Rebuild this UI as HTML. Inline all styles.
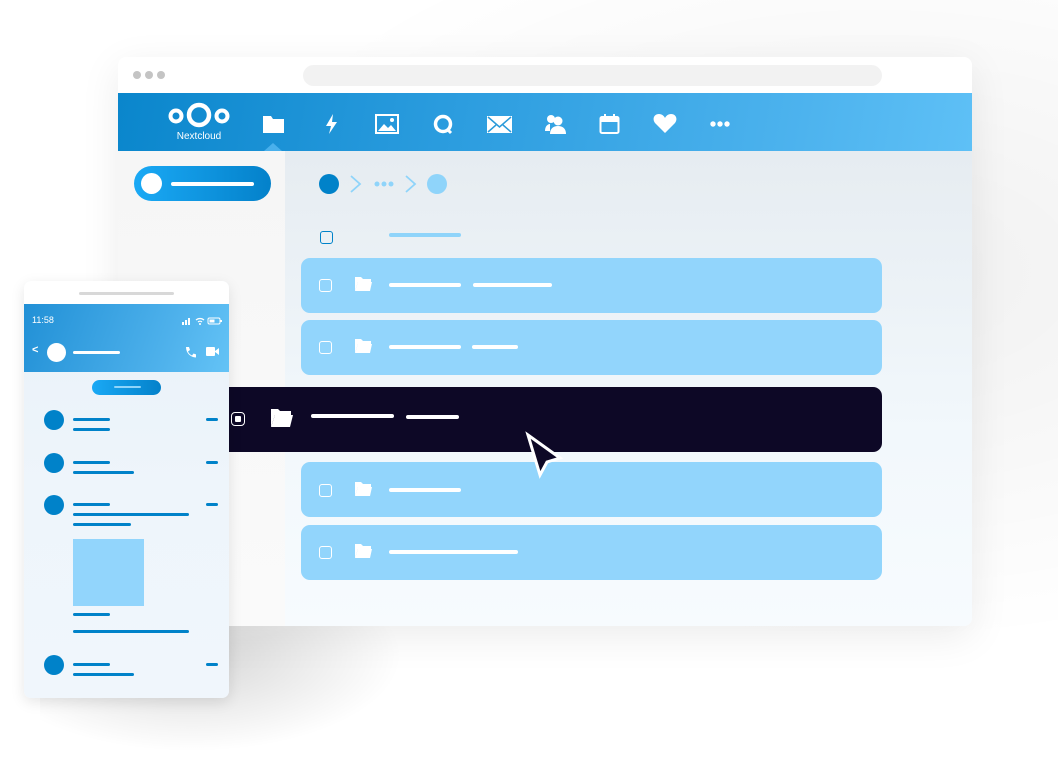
<!DOCTYPE html>
<html><head><meta charset="utf-8"><style>
*{margin:0;padding:0;box-sizing:border-box}
body{width:1058px;height:773px;background:#fff;position:relative;overflow:hidden;font-family:"Liberation Sans",sans-serif}
.a{position:absolute}
.ln{position:absolute;height:4px;border-radius:2px;background:#fff}
.bl{position:absolute;height:3px;border-radius:2px;background:#0082c9}
.row{position:absolute;left:301px;width:581px;height:55px;border-radius:9px;background:#92d5fc}
.cb{position:absolute;width:13px;height:13px;border:1.5px solid #fff;border-radius:3px}
.av{position:absolute;width:20px;height:20px;border-radius:50%;background:#0082c9}
</style></head><body>
<div class="a" style="left:140px;top:0;width:918px;height:680px;background:radial-gradient(ellipse at 80% 40%,rgba(0,0,0,0.06),rgba(0,0,0,0) 65%)"></div>
<div class="a" style="left:40px;top:610px;width:380px;height:150px;background:radial-gradient(ellipse at 40% 30%,rgba(0,0,0,0.16),rgba(0,0,0,0) 65%)"></div>
<div class="a" style="left:118px;top:57px;width:854px;height:569px;background:#fff;border-radius:8px;box-shadow:0 10px 40px rgba(0,0,0,0.08);overflow:hidden">
 <div class="a" style="left:15px;top:14px;width:8px;height:8px;border-radius:50%;background:#c4c4c4"></div>
 <div class="a" style="left:27px;top:14px;width:8px;height:8px;border-radius:50%;background:#c4c4c4"></div>
 <div class="a" style="left:39px;top:14px;width:8px;height:8px;border-radius:50%;background:#c4c4c4"></div>
 <div class="a" style="left:185px;top:8px;width:579px;height:21px;border-radius:11px;background:#f2f2f2"></div>
 <div class="a" style="left:0;top:36px;width:854px;height:58px;background:linear-gradient(100deg,#0a86cc 0%,#2c9ddf 40%,#4db3ee 80%,#5ec0f6 100%)"></div>
 <div class="a" style="left:0;top:94px;width:167px;height:475px;background:linear-gradient(180deg,#f6f6f6,#fafafa)"></div>
 <div class="a" style="left:167px;top:94px;width:687px;height:475px;background:linear-gradient(180deg,#e6ecf1,#f2f8fc 60%,#f7fbfe)"></div>
</div>
<svg class="a" style="left:168px;top:101px" width="62" height="30" viewBox="0 0 62 30">
<circle cx="8" cy="15" r="5.5" fill="none" stroke="#fff" stroke-width="4"/>
<circle cx="31" cy="14" r="10" fill="none" stroke="#fff" stroke-width="4.5"/>
<circle cx="54" cy="15" r="5.5" fill="none" stroke="#fff" stroke-width="4"/>
</svg>
<div class="a" style="left:168px;top:131px;width:62px;text-align:center;color:#fff;font-size:10px">Nextcloud</div>
<svg class="a" style="left:262px;top:114px" width="24" height="20" viewBox="0 0 24 20"><path d="M1 2h8l2 3h11v14H1z" fill="#fff"/></svg>
<div class="a" style="left:264px;top:143px;width:0;height:0;border-left:9px solid transparent;border-right:9px solid transparent;border-bottom:8px solid #49b0ec"></div>
<svg class="a" style="left:324px;top:113px" width="16" height="22" viewBox="0 0 16 22"><path d="M9 1L2 13h5l-2 8 8-12H8z" fill="#fff"/></svg>
<svg class="a" style="left:375px;top:114px" width="24" height="20" viewBox="0 0 24 20"><rect x="1" y="1" width="22" height="18" fill="none" stroke="#fff" stroke-width="2"/><path d="M3 17l6-7 4 4 3-3 5 6z" fill="#fff"/><circle cx="17" cy="6" r="2" fill="#fff"/></svg>
<svg class="a" style="left:432px;top:113px" width="22" height="22" viewBox="0 0 22 22"><circle cx="11" cy="11" r="7.5" fill="none" stroke="#fff" stroke-width="3.5"/><path d="M15 16l4 4" stroke="#fff" stroke-width="3"/></svg>
<svg class="a" style="left:487px;top:116px" width="25" height="17" viewBox="0 0 25 17"><rect x="0" y="0" width="25" height="17" fill="#fff"/><path d="M1 1l11.5 10L24 1M1 16l8-7M24 16l-8-7" fill="none" stroke="#2a9ad9" stroke-width="1.5"/></svg>
<svg class="a" style="left:544px;top:113px" width="22" height="22" viewBox="0 0 22 22"><circle cx="7" cy="6" r="4" fill="#fff"/><circle cx="14" cy="8" r="4.5" fill="#fff"/><path d="M6 21c0-5 3-8 8-8s8 3 8 8z" fill="#fff"/><path d="M1 18c0-5 3-7 5-7v7z" fill="#fff"/></svg>
<svg class="a" style="left:599px;top:113px" width="21" height="22" viewBox="0 0 21 22"><rect x="1.5" y="4" width="18" height="16" rx="1.5" fill="none" stroke="#fff" stroke-width="2"/><rect x="1.5" y="4" width="18" height="5" fill="#fff"/><rect x="5" y="1" width="2" height="5" fill="#fff"/><rect x="14" y="1" width="2" height="5" fill="#fff"/></svg>
<svg class="a" style="left:653px;top:113px" width="24" height="21" viewBox="0 0 24 21"><path d="M12 20L2 10C-1 6 1 1 6 1c3 0 5 2 6 4 1-2 3-4 6-4 5 0 7 5 4 9z" fill="#fff"/></svg>
<svg class="a" style="left:710px;top:120px" width="20" height="8"><circle cx="3" cy="4" r="2.7" fill="#fff"/><circle cx="10" cy="4" r="2.7" fill="#fff"/><circle cx="17" cy="4" r="2.7" fill="#fff"/></svg>
<div class="a" style="left:134px;top:166px;width:137px;height:35px;border-radius:18px;background:linear-gradient(90deg,#1aa9f5,#0481ca)"></div>
<div class="a" style="left:141px;top:173px;width:21px;height:21px;border-radius:50%;background:#fff"></div>
<div class="ln" style="left:171px;top:182px;width:83px"></div>
<div class="a" style="left:319px;top:174px;width:20px;height:20px;border-radius:50%;background:#0082c9"></div>
<svg class="a" style="left:348px;top:174px" width="70" height="20"><path d="M3 2l9 8-9 8M58 2l9 8-9 8" fill="none" stroke="#8fd4fa" stroke-width="1.8"/><circle cx="29" cy="10" r="2.5" fill="#8fd4fa"/><circle cx="36" cy="10" r="2.5" fill="#8fd4fa"/><circle cx="43" cy="10" r="2.5" fill="#8fd4fa"/></svg>
<div class="a" style="left:427px;top:174px;width:20px;height:20px;border-radius:50%;background:#8fd4fa"></div>
<div class="cb" style="left:320px;top:231px;border-color:#0082c9"></div>
<div class="ln" style="left:389px;top:233px;width:72px;background:#8fd4fa"></div>
<div class="row" style="top:258px"></div>
<div class="row" style="top:320px"></div>
<div class="row" style="top:462px"></div>
<div class="row" style="top:525px"></div>
<div class="cb" style="left:319px;top:279px"></div>
<div class="cb" style="left:319px;top:341px"></div>
<div class="cb" style="left:319px;top:484px"></div>
<div class="cb" style="left:319px;top:546px"></div>
<svg class="a" style="left:354px;top:276px" width="19" height="16"><path d="M1 1h6l2 2h8v3H4L1 15z" fill="#fff"/><path d="M4 6h14l-2 9H1z" fill="#fff"/></svg>
<svg class="a" style="left:354px;top:338px" width="19" height="16"><path d="M1 1h6l2 2h8v3H4L1 15z" fill="#fff"/><path d="M4 6h14l-2 9H1z" fill="#fff"/></svg>
<svg class="a" style="left:354px;top:481px" width="19" height="16"><path d="M1 1h6l2 2h8v3H4L1 15z" fill="#fff"/><path d="M4 6h14l-2 9H1z" fill="#fff"/></svg>
<svg class="a" style="left:354px;top:543px" width="19" height="16"><path d="M1 1h6l2 2h8v3H4L1 15z" fill="#fff"/><path d="M4 6h14l-2 9H1z" fill="#fff"/></svg>
<div class="ln" style="left:389px;top:283px;width:72px"></div><div class="ln" style="left:473px;top:283px;width:79px"></div>
<div class="ln" style="left:389px;top:345px;width:72px"></div><div class="ln" style="left:472px;top:345px;width:46px"></div>
<div class="ln" style="left:389px;top:488px;width:72px"></div>
<div class="ln" style="left:389px;top:550px;width:129px"></div>
<div class="a" style="left:229px;top:387px;width:653px;height:65px;border-radius:0 9px 9px 0;background:#0d0826"></div>
<div class="a" style="left:231px;top:412px;width:14px;height:14px;border:1.5px solid #fff;border-radius:4px"></div>
<div class="a" style="left:235px;top:416px;width:6px;height:6px;background:#fff;border-radius:1px"></div>
<svg class="a" style="left:270px;top:408px" width="24" height="20"><path d="M1 1h7l2 2h11v4H5L1 19z" fill="#fff"/><path d="M5 7h18l-3 12H1z" fill="#fff"/></svg>
<div class="ln" style="left:311px;top:414px;width:83px"></div>
<div class="ln" style="left:406px;top:415px;width:53px"></div>
<svg class="a" style="left:522px;top:430px" width="46" height="52"><path d="M6 5l32 23-13 4-7 13z" fill="#0d0826" stroke="#fff" stroke-width="3" stroke-linejoin="miter"/></svg>
<div class="a" style="left:24px;top:281px;width:205px;height:417px;border-radius:7px;background:linear-gradient(180deg,#e9f1f8,#eef5fb 50%,#f0f6fc);box-shadow:0 4px 14px rgba(0,0,0,0.1);overflow:hidden">
 <div class="a" style="left:0;top:0;width:205px;height:23px;background:#fff"></div>
 <div class="a" style="left:55px;top:11px;width:95px;height:3px;border-radius:2px;background:#d8d8d8"></div>
 <div class="a" style="left:0;top:23px;width:205px;height:68px;background:linear-gradient(110deg,#2190d6,#4fb2ec 70%,#64c3f6)"></div>
 <div class="a" style="left:8px;top:34px;color:#fff;font-size:9px">11:58</div>
 <svg class="a" style="left:157px;top:36px" width="44" height="8"><rect x="1" y="5" width="2" height="3" fill="#fff"/><rect x="4" y="3" width="2" height="5" fill="#fff"/><rect x="7" y="1" width="2" height="7" fill="#fff"/><path d="M15 3a6 6 0 0 1 8 0M17 5a3 3 0 0 1 4 0" stroke="#fff" fill="none" stroke-width="1.2"/><circle cx="19" cy="7" r="1" fill="#fff"/><rect x="27" y="1" width="12" height="6" rx="1.5" fill="none" stroke="#fff"/><rect x="28.5" y="2.5" width="5" height="3" fill="#fff"/><rect x="39.5" y="3" width="1.5" height="2" fill="#fff"/></svg>
 <div class="a" style="left:8px;top:63px;color:#fff;font-size:11px;font-weight:bold">&lt;</div>
 <div class="a" style="left:23px;top:62px;width:19px;height:19px;border-radius:50%;background:#fff"></div>
 <div class="ln" style="left:49px;top:70px;width:47px;height:3px"></div>
 <svg class="a" style="left:160px;top:65px" width="12" height="12"><path d="M2 1l3 0 1 3-2 1.5c1 2 2 3 4 4l1.5-2 3 1v3c-6 0-10.5-4.5-10.5-10.5z" fill="#fff"/></svg>
 <svg class="a" style="left:182px;top:66px" width="13" height="9"><rect x="0" y="0" width="9" height="9" rx="1" fill="#fff"/><path d="M9 4l4-3v7l-4-3z" fill="#fff"/></svg>
 <div class="a" style="left:68px;top:99px;width:69px;height:15px;border-radius:8px;background:linear-gradient(90deg,#1aa9f5,#0481ca)"></div>
 <div class="a" style="left:90px;top:105px;width:27px;height:2px;border-radius:1px;background:#8fd4fa"></div>
 <div class="av" style="left:20px;top:129px"></div>
 <div class="bl" style="left:49px;top:137px;width:37px"></div><div class="bl" style="left:49px;top:147px;width:37px"></div><div class="bl" style="left:182px;top:137px;width:12px"></div>
 <div class="av" style="left:20px;top:172px"></div>
 <div class="bl" style="left:49px;top:180px;width:37px"></div><div class="bl" style="left:49px;top:190px;width:61px"></div><div class="bl" style="left:182px;top:180px;width:12px"></div>
 <div class="av" style="left:20px;top:214px"></div>
 <div class="bl" style="left:49px;top:222px;width:37px"></div><div class="bl" style="left:49px;top:232px;width:116px"></div><div class="bl" style="left:49px;top:242px;width:58px"></div><div class="bl" style="left:182px;top:222px;width:12px"></div>
 <div class="a" style="left:49px;top:258px;width:71px;height:67px;background:#92d5fc"></div>
 <div class="bl" style="left:49px;top:332px;width:37px"></div><div class="bl" style="left:49px;top:349px;width:116px"></div>
 <div class="av" style="left:20px;top:374px"></div>
 <div class="bl" style="left:49px;top:382px;width:37px"></div><div class="bl" style="left:49px;top:392px;width:61px"></div><div class="bl" style="left:182px;top:382px;width:12px"></div>
</div>
</body></html>
